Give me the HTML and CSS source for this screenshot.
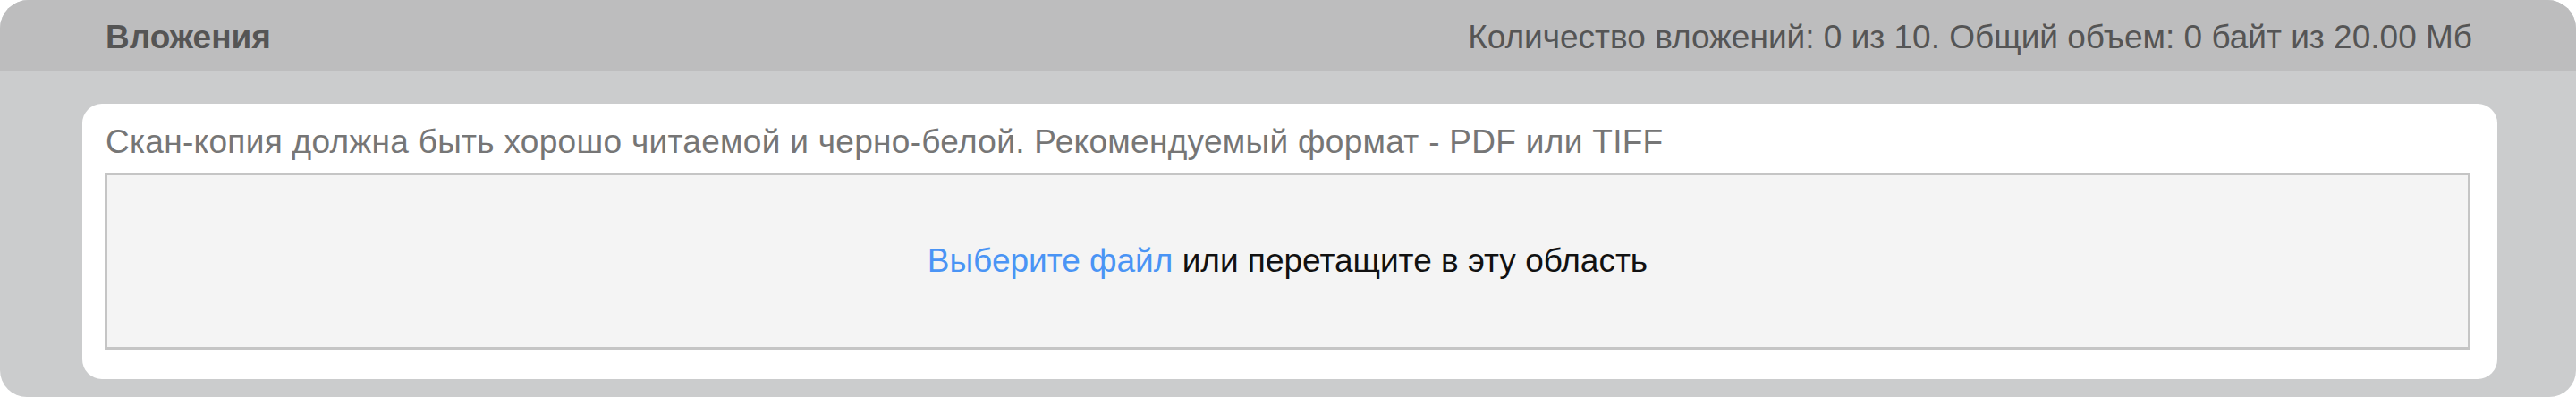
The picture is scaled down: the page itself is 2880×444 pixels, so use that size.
FILE: index.html
```html
<!DOCTYPE html>
<html lang="ru">
<head>
<meta charset="utf-8">
<title>Вложения</title>
<link rel="stylesheet" href="styles.css">
</head>
<body>
<section class="attachments">
  <header class="attachments-header">
    <h2 class="attachments-title">Вложения</h2>
    <div class="attachments-stats">Количество вложений: 0 из 10. Общий объем: 0 байт из 20.00 Мб</div>
  </header>
  <div class="attachments-body">
    <div class="upload-card">
      <p class="upload-hint">Скан-копия должна быть хорошо читаемой и черно-белой. Рекомендуемый формат - PDF или TIFF</p>
      <div class="dropzone">
        <span class="dropzone-text"><a class="dropzone-link" href="#">Выберите файл</a> или перетащите в эту область</span>
      </div>
    </div>
  </div>
</section>
</body>
</html>
```
FILE: styles.css
```css
html, body {
  margin: 0;
  padding: 0;
  background: #ffffff;
}

body {
  font-family: "Liberation Sans", Arial, Helvetica, sans-serif;
  font-size: 37px;
  line-height: 44px;
}

.attachments {
  width: 2880px;
  height: 444px;
  box-sizing: border-box;
  background: #cbcccd;
  border-radius: 32px 32px 30px 30px;
  overflow: hidden;
  display: flex;
  flex-direction: column;
}

.attachments-header {
  height: 79px;
  box-sizing: border-box;
  padding: 5px 116px 0 118px;
  background: #bdbdbe;
  display: flex;
  align-items: center;
  justify-content: space-between;
  color: #555555;
}

.attachments-title {
  margin: 0;
  font-size: 37px;
  font-weight: bold;
  line-height: 44px;
}

.attachments-stats {
  font-size: 37px;
  line-height: 44px;
}

.attachments-body {
  flex: 1;
  padding: 37px 88px 20px 92px;
  display: flex;
}

.upload-card {
  flex: 1;
  background: #ffffff;
  border-radius: 22px;
  padding: 21px 30px 33px 25px;
  display: flex;
  flex-direction: column;
}

.upload-hint {
  margin: 0 0 12px 1px;
  color: #767676;
  font-size: 37px;
  letter-spacing: 0.3px;
  line-height: 44px;
}

.dropzone {
  flex: 1;
  background: #f4f4f4;
  border: 3px solid #c5c5c5;
  display: flex;
  align-items: center;
  justify-content: center;
}

.dropzone-text {
  color: #111111;
  font-size: 37px;
  line-height: 44px;
}

.dropzone-link {
  color: #4a94f5;
  text-decoration: none;
}
```
